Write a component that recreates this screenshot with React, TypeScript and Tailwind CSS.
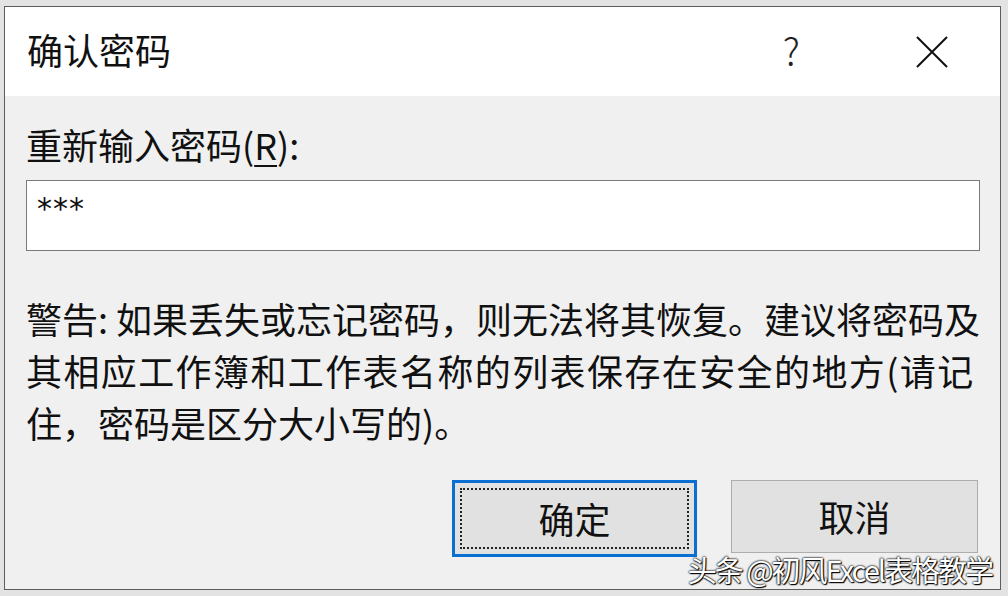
import React from "react";

const cjk = { fontFamily: '"Noto Sans CJK SC", "Noto Sans", sans-serif' };

export default function App() {
  return (
    <div
      className="w-[1008px] h-[596px] bg-[#e3e3e3] pt-[6px] pl-[4px] pr-[7px] pb-[6px] overflow-hidden"
      style={cjk}
    >
      <div className="relative w-full h-full border border-[#5c5c5c] flex flex-col bg-[#f0f0f0] text-[#111]">
        {/* Title bar */}
        <div className="h-[89px] bg-white flex items-center pl-[22px] pr-[52px] shrink-0">
          <div className="text-[36px] leading-[36px] mt-[-6px] flex-1">确认密码</div>
          <div className="text-[38px] leading-[38px] font-light mt-[-4px] mr-[116px] text-[#222]">?</div>
          <svg width="32" height="32" viewBox="0 0 32 32" className="mt-[0px]">
            <path d="M1 1 L31 31 M31 1 L1 31" stroke="#111" strokeWidth="2" fill="none" />
          </svg>
        </div>

        {/* Body */}
        <div className="flex-1 flex flex-col pl-[21px] pr-[20px]">
          <div className="mt-[30px] text-[36px] leading-[36px]">
            重新输入密码(<span className="underline underline-offset-[5px] decoration-[2px]">R</span>):
          </div>
          <div className="mt-[18px] h-[71px] bg-white border border-[#7a7a7a] pl-[10px] pt-[10px]">
            <span className="leading-[36px] tracking-[1px]" style={{ fontFamily: '"DejaVu Sans", sans-serif', fontSize: 30 }}>
              ***
            </span>
          </div>
          <div className="mt-[41px] text-[36px] leading-[52px] whitespace-nowrap">
            <div>警告: 如果丢失或忘记密码，则无法将其恢复。建议将密码及</div>
            <div className="tracking-[1.4px]">其相应工作簿和工作表名称的列表保存在安全的地方(请记</div>
            <div>住，密码是区分大小写的)。</div>
          </div>
          <div className="mt-[32px] flex justify-end items-start gap-[34px] pr-[2px]">
            <div className="w-[245px] h-[77px] border-[3px] border-[#0a6fd0] bg-[#e1e1e1] p-[5px]">
              <div className="w-full h-full border-[2px] border-dotted border-[#222] flex items-center justify-center text-[36px] leading-[36px] pb-[2px]">
                确定
              </div>
            </div>
            <div className="w-[247px] h-[73px] border border-[#adadad] bg-[#e1e1e1] flex items-center justify-center text-[36px] leading-[36px] pb-[2px]">
              取消
            </div>
          </div>
        </div>

        {/* Watermark */}
        <div className="absolute right-[8px] bottom-[3px] text-[29px] leading-[34px] tracking-[-2px] text-white whitespace-nowrap [text-shadow:0_0_2px_#000,0_0_2px_#000,1px_1px_1px_#000]">
          头条 @初风Excel表格教学
        </div>
      </div>
    </div>
  );
}
